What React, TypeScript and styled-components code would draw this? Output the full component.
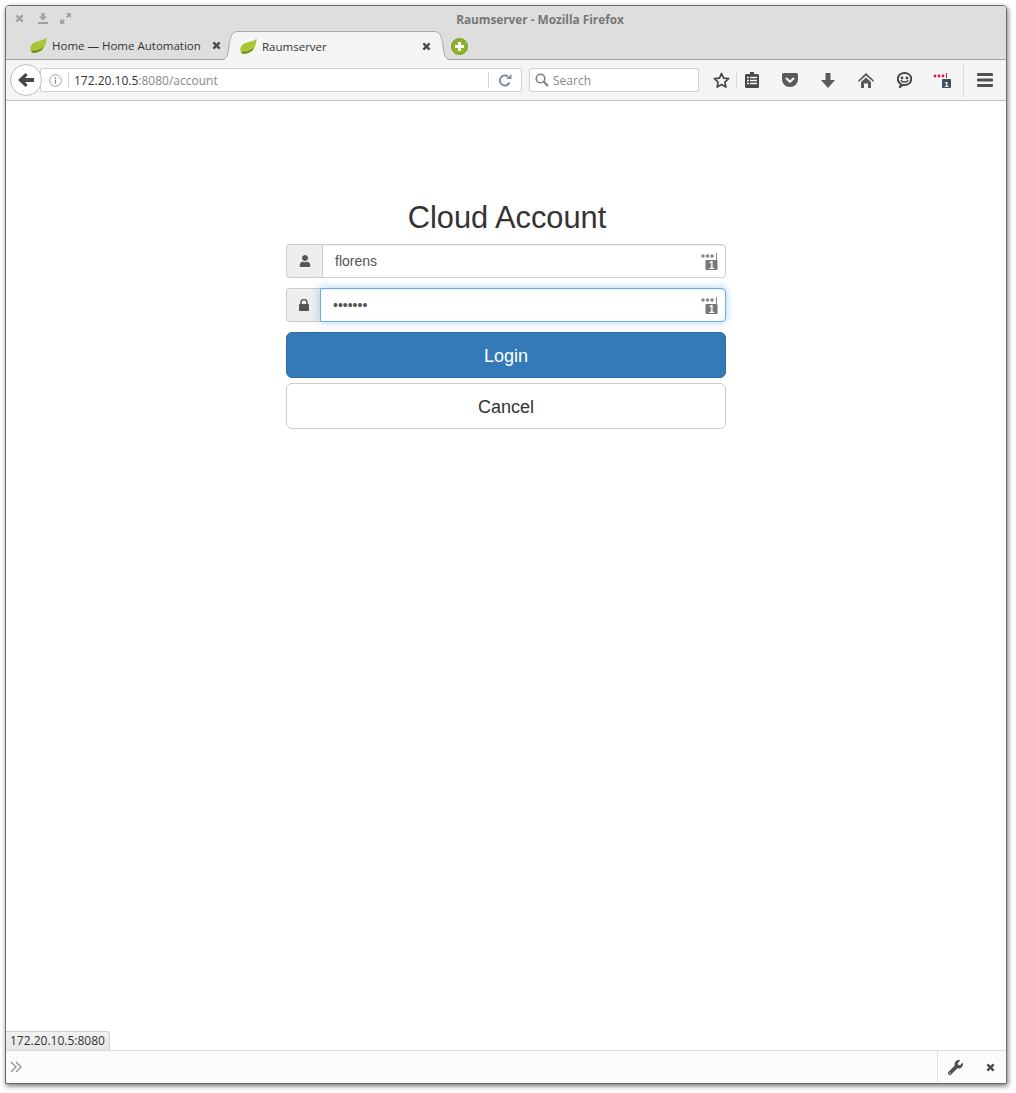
import React from 'react';
import styled, { createGlobalStyle } from 'styled-components';
import { FaUser, FaWrench } from 'react-icons/fa';

const GlobalStyle = createGlobalStyle`
  html, body {
    margin: 0;
    background: #fff;
  }
  * {
    box-sizing: border-box;
  }
`;

const chromeFont = `"Open Sans", "Noto Sans", sans-serif`;
const pageFont = `"Liberation Sans", Arial, sans-serif`;

const Page = styled.div`
  width: 1016px;
  height: 1093px;
  padding: 5px 9px 9px 5px;
`;

const Browser = styled.div`
  display: flex;
  flex-direction: column;
  height: 100%;
  border: 1px solid #6b6b6b;
  border-radius: 4px 4px 0 0;
  box-shadow: 1px 2px 5px rgba(0, 0, 0, 0.55);
  font-family: ${chromeFont};
  overflow: hidden;
`;

const TitleBar = styled.div`
  display: flex;
  align-items: center;
  height: 25px;
  padding: 0 3px 0 2px;
  background: #dedede;
`;

const WindowButton = styled.div`
  display: flex;
  align-items: center;
  justify-content: center;
  width: 23px;
  height: 25px;
`;

const WindowTitle = styled.div`
  flex: 1;
  padding-top: 1px;
  text-align: center;
  font-size: 11.8px;
  font-weight: 700;
  color: #777;
`;

const TabStrip = styled.div`
  display: flex;
  align-items: stretch;
  height: 29px;
  padding-left: 24px;
  background: #dedede;
  border-bottom: 1px solid #a3a3a3;
`;

const TabContent = styled.div<{ $active?: boolean }>`
  display: flex;
  align-items: center;
  width: 192px;
  height: ${p => (p.$active ? '29px' : '28px')};
  padding-top: ${p => (p.$active ? '1px' : '0')};
  background: ${p => (p.$active ? '#f5f5f5' : 'transparent')};
  border-top: ${p => (p.$active ? '1px solid #a8a8a8' : '0')};
`;

const ActiveTab = styled.div`
  display: flex;
  height: 29px;
  margin-bottom: -1px;
`;

const TabLabel = styled.span`
  flex: 1;
  margin-left: 5px;
  font-size: 11.5px;
  color: #333;
  white-space: nowrap;
`;

const TabClose = styled.div`
  display: flex;
  align-items: center;
  justify-content: center;
  width: 12px;
`;

const NewTab = styled.div`
  display: flex;
  align-items: center;
  margin-left: 1px;
  padding-top: 2px;
`;

const Toolbar = styled.div`
  display: flex;
  align-items: center;
  height: 41px;
  padding-left: 4px;
  background: #f5f5f5;
  border-bottom: 1px solid #c2c2c2;
`;

const BackButton = styled.div`
  position: relative;
  z-index: 1;
  display: flex;
  align-items: center;
  justify-content: center;
  width: 32px;
  height: 32px;
  background: #fff;
  border: 1px solid #bdbdbd;
  border-radius: 50%;
`;

const UrlBar = styled.div`
  display: flex;
  align-items: center;
  width: 482px;
  height: 24px;
  margin-left: -2px;
  padding-left: 5px;
  background: #fff;
  border: 1px solid #cfcfcf;
  border-radius: 2px;
`;

const InfoSlot = styled.div`
  display: flex;
  width: 18px;
  justify-content: center;
  margin-right: 4px;
`;

const BarDivider = styled.div`
  width: 1px;
  height: 16px;
  background: #d6d6d6;
`;

const UrlText = styled.div`
  flex: 1;
  margin-left: 5px;
  font-size: 12px;
  color: #888;
`;

const UrlHost = styled.span`
  color: #333;
`;

const ReloadSlot = styled.div`
  display: flex;
  align-items: center;
  justify-content: center;
  width: 32px;
`;

const SearchBox = styled.div`
  display: flex;
  align-items: center;
  gap: 4px;
  width: 170px;
  height: 24px;
  margin-left: 7px;
  padding-left: 5px;
  background: #fff;
  border: 1px solid #cfcfcf;
  border-radius: 2px;
  font-size: 12px;
  color: #888;
`;

const StarSlot = styled.div`
  display: flex;
  align-items: center;
  justify-content: center;
  width: 29px;
  margin-left: 8px;
`;

const ToolDivider = styled.div<{ $tall?: boolean }>`
  width: 1px;
  height: ${p => (p.$tall ? '34px' : '18px')};
  background: #d8d8d8;
`;

const ToolGroup = styled.div`
  display: grid;
  grid-template-columns: repeat(6, 38px);
  margin-left: -4px;
  margin-right: 2px;
`;

const ToolButton = styled.div<{ $wide?: boolean }>`
  display: flex;
  align-items: center;
  justify-content: center;
  width: ${p => (p.$wide ? '41px' : '38px')};
  height: 24px;
`;

const Content = styled.main`
  position: relative;
  flex: 1;
  padding-top: 99px;
  background: #fff;
  font-family: ${pageFont};
  color: #333;
`;

const LoginForm = styled.form`
  display: flex;
  flex-direction: column;
  width: 440px;
  margin: 0 auto;
`;

const Heading = styled.h2`
  margin: 0 0 9px;
  padding-left: 2px;
  font-size: 30.8px;
  font-weight: 500;
  line-height: 35px;
  text-align: center;
`;

const InputRow = styled.div`
  position: relative;
  display: flex;
  height: 34px;
  margin-bottom: 10px;
`;

const Addon = styled.span<{ $width: number }>`
  display: flex;
  align-items: center;
  justify-content: center;
  width: ${p => p.$width}px;
  background: #eee;
  border: 1px solid #ccc;
  border-right: 0;
  border-radius: 4px 0 0 4px;
  color: #555;
  font-size: 12px;
`;

const TextInput = styled.input<{ $focused?: boolean }>`
  flex: 1;
  min-width: 0;
  height: 34px;
  padding: 6px 12px;
  background: #fff;
  border: 1px solid ${p => (p.$focused ? '#66afe9' : '#ccc')};
  border-radius: 0 4px 4px 0;
  box-shadow: inset 0 1px 1px rgba(0, 0, 0, 0.075)
    ${p => (p.$focused ? ', 0 0 8px rgba(102, 175, 233, 0.6)' : '')};
  outline: none;
  color: #555;
  font-family: ${pageFont};
  font-size: 14px;
`;

const KeeperBadge = styled.svg`
  position: absolute;
  top: 8px;
  right: 8px;
`;

const BigButton = styled.button<{ $primary?: boolean }>`
  height: 46px;
  margin-bottom: 5px;
  padding: 2px 0 0;
  background: ${p => (p.$primary ? '#337ab7' : '#fff')};
  border: 1px solid ${p => (p.$primary ? '#2e6da4' : '#ccc')};
  border-radius: 6px;
  color: ${p => (p.$primary ? '#fff' : '#333')};
  font-family: ${pageFont};
  font-size: 18px;
`;

const StatusPanel = styled.div`
  position: absolute;
  left: 0;
  bottom: 0;
  height: 19px;
  padding: 0 4px;
  background: linear-gradient(#f2f2f2, #e6e6e6);
  border: 1px solid #cfcfcf;
  border-width: 1px 1px 0 0;
  border-top-right-radius: 3px;
  font-family: ${chromeFont};
  font-size: 12px;
  line-height: 18px;
  color: #333;
`;

const AddonBar = styled.div`
  display: flex;
  align-items: stretch;
  height: 33px;
  background: #fbfbfb;
  border-top: 1px solid #dcdcdc;
`;

const Overflow = styled.div`
  display: flex;
  align-items: center;
  flex: 1;
  padding-left: 4px;
`;

const AddonTools = styled.div`
  display: flex;
  align-items: center;
  width: 69px;
  padding-left: 10px;
  border-left: 1px solid #e0e0e0;
  gap: 23px;
`;

const CloseMark = ({ size = 9, color = '#4a4a4a' }: { size?: number; color?: string }) => (
  <svg width={size} height={size} viewBox="0 0 10 10">
    <path d="M1.500 1.500l7 7M8.500 1.500l-7 7" stroke={color} strokeWidth="2.600" />
  </svg>
);

const Leaf = () => (
  <svg width="17" height="17" viewBox="0 0 17 17">
    <path d="M16.600.6c-.3 4-.9 8.600-4.300 12C9.300 15.600 3.300 17 1.300 15-.8 11.600.6 7.500 4.100 5.700 8 3.700 13 4 16.600.6z" fill="#a9c733" />
    <path d="M13.400 9.800c-2.800 3-7.500 4.300-11.700 4l-.4 1c2 2 8 .8 11-2.200.6-.8 1-1.700 1.100-2.800z" fill="#6f8d22" />
  </svg>
);

const TabEdge = ({ flip }: { flip?: boolean }) => (
  <svg width="18" height="29" viewBox="0 0 18 29" transform={flip ? 'scale(-1 1)' : undefined}>
    <path d="M0 29V28.500C4.500 28.500 6 25 7 14 8.500 4 11 .5 16 .5H18V29z" fill="#f5f5f5" />
    <path d="M0 28.500C4.500 28.500 6 25 7 14 8.500 4 11 .5 16 .5H18" fill="none" stroke="#a8a8a8" />
  </svg>
);

const Keeper = () => (
  <KeeperBadge width="17" height="18" viewBox="0 0 17 18">
    <circle cx="2" cy="4" r="1.800" fill="#888" />
    <circle cx="6.500" cy="4" r="1.800" fill="#888" />
    <circle cx="11" cy="4" r="1.800" fill="#888" />
    <path d="M15.500 1v7" stroke="#888" />
    <rect x="4.500" y="8" width="12" height="10" rx="1" fill="#777" />
    <text x="10.500" y="16.500" fontSize="10" fontWeight="700" textAnchor="middle" fill="#fff" fontFamily="Liberation Sans">1</text>
  </KeeperBadge>
);

const App = () => {
  return (
    <Page>
      <GlobalStyle />
      <Browser>
        <TitleBar>
          <WindowButton>
            <CloseMark size={9} color="#a0a0a0" />
          </WindowButton>
          <WindowButton>
            <svg width="10" height="11" viewBox="0 0 10 11">
              <path d="M3.500 0h3v3.500H9L5 7.500 1 3.500h2.500zM0 9h10v2H0z" fill="#a0a0a0" />
            </svg>
          </WindowButton>
          <WindowButton>
            <svg width="11" height="11" viewBox="0 0 11 11">
              <path d="M6 0h5v5L9.300 3.300 7.500 5 6 3.500l1.700-1.800zM5 11H0V6l1.700 1.700L3.500 6 5 7.500 3.300 9.300z" fill="#a0a0a0" />
            </svg>
          </WindowButton>
          <WindowTitle>Raumserver - Mozilla Firefox</WindowTitle>
        </TitleBar>

        <TabStrip>
          <TabContent>
            <Leaf />
            <TabLabel>Home — Home Automation</TabLabel>
            <TabClose>
              <CloseMark />
            </TabClose>
          </TabContent>
          <ActiveTab>
            <TabEdge />
            <TabContent $active>
              <Leaf />
              <TabLabel>Raumserver</TabLabel>
              <TabClose>
                <CloseMark />
              </TabClose>
            </TabContent>
            <TabEdge flip />
          </ActiveTab>
          <NewTab>
            <svg width="17" height="17" viewBox="0 0 17 17">
              <circle cx="8.500" cy="8.500" r="8" fill="#8db32c" stroke="#76982a" />
              <path d="M8.500 4v9M4 8.500h9" stroke="#fff" strokeWidth="2.800" />
            </svg>
          </NewTab>
        </TabStrip>

        <Toolbar>
          <BackButton>
            <svg width="16" height="14" viewBox="0 0 16 14">
              <path d="M7.500 0L0 7l7.500 7 2.200-2.200L7 9h9V5H7l2.700-2.800z" fill="#484848" />
            </svg>
          </BackButton>
          <UrlBar>
            <InfoSlot>
              <svg width="13" height="13" viewBox="0 0 13 13">
                <circle cx="6.500" cy="6.500" r="5.800" fill="none" stroke="#a0a0a0" />
                <path d="M6.500 5.500v4.200M6.500 3v1.400" stroke="#888" strokeWidth="1.200" />
              </svg>
            </InfoSlot>
            <BarDivider />
            <UrlText>
              <UrlHost>172.20.10.5</UrlHost>:8080/account
            </UrlText>
            <BarDivider />
            <ReloadSlot>
              <svg width="14" height="14" viewBox="0 0 14 14">
                <path d="M11.500 9.500A5 5 0 1 1 10 3.500" fill="none" stroke="#858f96" strokeWidth="2" />
                <path d="M8 6h5.500V1z" fill="#858f96" />
              </svg>
            </ReloadSlot>
          </UrlBar>
          <SearchBox>
            <svg width="14" height="14" viewBox="0 0 14 14">
              <circle cx="5.500" cy="5.500" r="4.300" fill="none" stroke="#808080" strokeWidth="1.600" />
              <path d="M8.700 8.700L13 13" stroke="#808080" strokeWidth="2.200" />
            </svg>
            Search
          </SearchBox>
          <StarSlot>
            <svg width="17" height="17" viewBox="0 0 17 17">
              <path d="M8.500 1.500l2.100 4.700 5 .5-3.700 3.400 1 5-4.400-2.500-4.400 2.500 1-5L1.400 6.700l5-.5z" fill="none" stroke="#474747" strokeWidth="1.700" strokeLinejoin="round" />
            </svg>
          </StarSlot>
          <ToolDivider />
          <ToolGroup>
            <ToolButton>
              <svg width="14" height="16" viewBox="0 0 14 16">
                <path d="M5 0h4v2h3.500A1.500 1.500 0 0 1 14 3.500v11a1.500 1.500 0 0 1-1.500 1.500h-11A1.500 1.500 0 0 1 0 14.500v-11A1.500 1.500 0 0 1 1.500 2H5z" fill="#484848" />
                <path d="M2 5.500h2M5 5.500h7M2 8.500h2M5 8.500h7M2 11.500h2M5 11.500h7" stroke="#f5f5f5" strokeWidth="1.300" />
              </svg>
            </ToolButton>
            <ToolButton>
              <svg width="16" height="14" viewBox="0 0 16 14">
                <path d="M1.500 0h13A1.500 1.500 0 0 1 16 1.500V6c0 4.500-3.500 8-8 8S0 10.500 0 6V1.500A1.500 1.500 0 0 1 1.500 0z" fill="#5a5a5a" />
                <path d="M4 5l4 3.800L12 5" fill="none" stroke="#f5f5f5" strokeWidth="2.200" />
              </svg>
            </ToolButton>
            <ToolButton>
              <svg width="14" height="15" viewBox="0 0 14 15">
                <path d="M4.500 0h5v7H14l-7 8-7-8h4.500z" fill="#5a5a5a" />
              </svg>
            </ToolButton>
            <ToolButton>
              <svg width="16" height="15" viewBox="0 0 16 15">
                <path d="M8 0L0 7.500l1 1.200 7-6.200 7 6.200 1-1.200z" fill="#5a5a5a" />
                <path d="M3 9l5-4.500L13 9v6h-3v-4.500H6V15H3z" fill="#5a5a5a" />
              </svg>
            </ToolButton>
            <ToolButton>
              <svg width="15" height="16" viewBox="0 0 15 16">
                <path d="M7.500 1C3.600 1 .8 3.400.8 7c0 2.300 1.200 4 3 5L3 15l3.200-2.200c.4.100.9.200 1.300.200 3.900 0 6.700-2.500 6.700-6S11.400 1 7.500 1z" fill="#f5f5f5" stroke="#474747" strokeWidth="2" />
                <circle cx="5" cy="6" r="1.400" fill="#474747" />
                <circle cx="10" cy="6" r="1.400" fill="#474747" />
                <path d="M3.800 8.200c1 2.400 6.400 2.400 7.400 0" fill="none" stroke="#474747" strokeWidth="1.500" />
              </svg>
            </ToolButton>
            <ToolButton>
              <svg width="18" height="16" viewBox="0 0 18 16">
                <circle cx="2" cy="4" r="1.400" fill="#e0103a" />
                <circle cx="6" cy="4" r="1.400" fill="#e0103a" />
                <circle cx="10" cy="4" r="1.400" fill="#e0103a" />
                <path d="M13.500 1v5" stroke="#e0103a" />
                <rect x="9" y="7" width="9" height="9" rx="1" fill="#3d4f60" />
                <text x="13.500" y="14.500" fontSize="8" fontWeight="700" textAnchor="middle" fill="#fff" fontFamily="Liberation Sans">1</text>
              </svg>
            </ToolButton>
          </ToolGroup>
          <ToolDivider $tall />
          <ToolButton $wide>
            <svg width="16" height="14" viewBox="0 0 16 14">
              <path d="M1 1.500h14M1 7h14M1 12.500h14" stroke="#505050" strokeWidth="2.800" strokeLinecap="round" />
            </svg>
          </ToolButton>
        </Toolbar>

        <Content>
          <LoginForm>
            <Heading>Cloud Account</Heading>
            <InputRow>
              <Addon $width={36}>
                <FaUser />
              </Addon>
              <TextInput type="text" defaultValue="florens" readOnly />
              <Keeper />
            </InputRow>
            <InputRow>
              <Addon $width={34}>
                <svg width="10" height="12" viewBox="0 0 10 12">
                  <path d="M2 5V3.500a3 3 0 0 1 6 0V5" fill="none" stroke="#555" strokeWidth="1.500" />
                  <rect y="5" width="10" height="7" rx="1" fill="#555" />
                </svg>
              </Addon>
              <TextInput type="password" defaultValue="florens" readOnly $focused />
              <Keeper />
            </InputRow>
            <BigButton type="button" $primary>
              Login
            </BigButton>
            <BigButton type="button">Cancel</BigButton>
          </LoginForm>
          <StatusPanel>172.20.10.5:8080</StatusPanel>
        </Content>

        <AddonBar>
          <Overflow>
            <svg width="12" height="12" viewBox="0 0 12 12">
              <path d="M1 1l5 5-5 5M6 1l5 5-5 5" fill="none" stroke="#8e8e8e" strokeWidth="1.300" />
            </svg>
          </Overflow>
          <AddonTools>
            <FaWrench size={15} color="#4f4f4f" />
            <CloseMark size={9} />
          </AddonTools>
        </AddonBar>
      </Browser>
    </Page>
  );
};

export default App;
